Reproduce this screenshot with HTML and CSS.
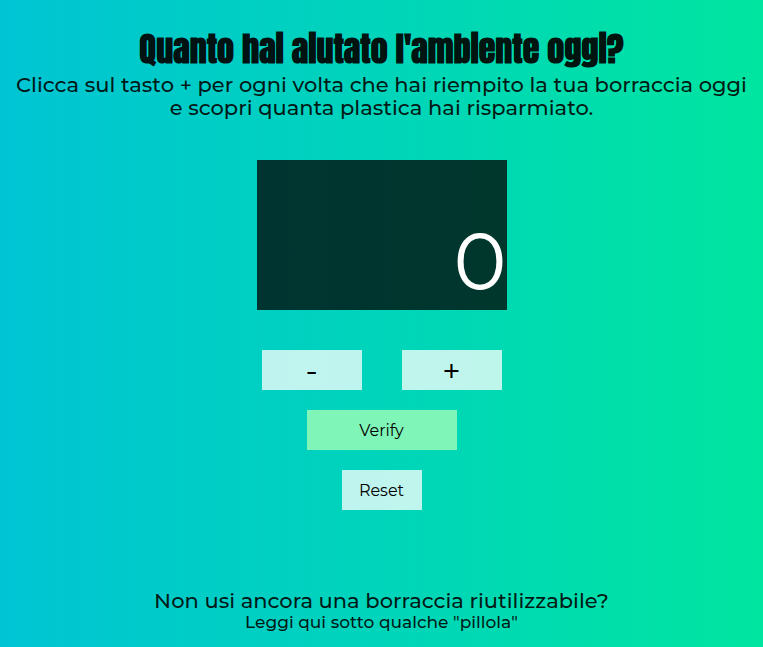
FILE: index.html
```html
<!DOCTYPE html>
<html lang="it">
<head>
  <meta charset="utf-8">
  <meta name="viewport" content="width=device-width, initial-scale=1">
  <title>Quanto hai aiutato l'ambiente oggi?</title>
  <link rel="stylesheet" href="styles.css">
</head>
<body>
  <header class="intro">
    <h1 class="title">Quanto hai aiutato l'ambiente oggi?</h1>
    <p class="lead">Clicca sul tasto + per ogni volta che hai riempito la tua borraccia oggi<br>e scopri quanta plastica hai risparmiato.</p>
  </header>
  <main class="counter">
    <output class="display">0</output>
    <div class="steps">
      <button class="button step" type="button">-</button>
      <button class="button step" type="button">+</button>
    </div>
    <button class="button verify" type="button">Verify</button>
    <button class="button reset" type="button">Reset</button>
  </main>
  <footer class="outro">
    <p class="question">Non usi ancora una borraccia riutilizzabile?</p>
    <p class="hint">Leggi qui sotto qualche "pillola"</p>
  </footer>
</body>
</html>
```
FILE: styles.css
```css
* {
  box-sizing: border-box;
  margin: 0;
}

body {
  display: flex;
  flex-direction: column;
  align-items: center;
  min-height: 100vh;
  padding: 25px 8px 15px;
  background: linear-gradient(to right, #00c4d4, #00e5a0);
  color: rgba(0, 0, 0, 0.88);
  font-family: Montserrat, Inter, sans-serif;
  text-align: center;
}

.title {
  font-family: Anton, "Liberation Sans Narrow", sans-serif;
  font-size: 34px;
  line-height: 48px;
  color: rgba(0, 0, 0, 0.93);
}

.lead,
.question {
  font-size: 21px;
  font-weight: 500;
  line-height: 23px;
}

.counter {
  display: flex;
  flex-direction: column;
  align-items: center;
  gap: 20px;
  margin-top: 41px;
}

.display {
  display: flex;
  align-items: flex-end;
  justify-content: flex-end;
  width: 250px;
  height: 150px;
  margin-bottom: 20px;
  background: rgba(0, 0, 0, 0.75);
  color: #fff;
  font-size: 80px;
  font-weight: 400;
  line-height: 96px;
}

.steps {
  display: flex;
  gap: 40px;
}

.button {
  height: 40px;
  padding: 0;
  border: 0;
  background: rgba(255, 255, 255, 0.75);
  color: #000;
  font-family: inherit;
  font-size: 16px;
}

.step {
  width: 100px;
  font-size: 32px;
}

.verify {
  width: 150px;
  background: #80f5b8;
}

.reset {
  width: 80px;
}

.outro {
  margin-top: auto;
}

.hint {
  font-size: 17px;
  font-weight: 500;
  line-height: 20px;
}
```
